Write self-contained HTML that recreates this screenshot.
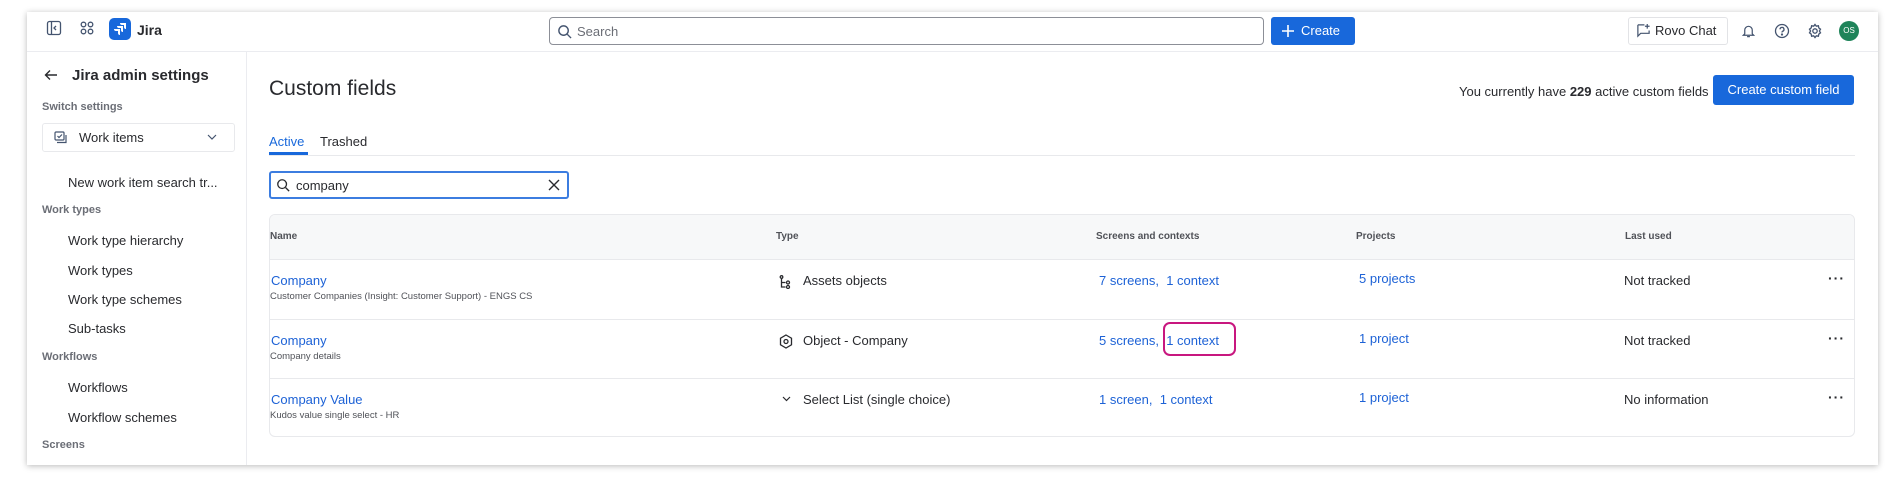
<!DOCTYPE html>
<html><head><meta charset="utf-8"><style>
*{box-sizing:border-box;margin:0;padding:0}
body{width:1902px;height:488px;background:#fff;font-family:"Liberation Sans",sans-serif;color:#292a2e;position:relative;overflow:hidden}
.win{position:absolute;left:27px;top:12px;width:1851px;height:453px;background:#fff;box-shadow:0 1px 6px rgba(0,0,0,.28);overflow:hidden}
.a{position:absolute;white-space:nowrap}
.hdr{position:absolute;left:0;top:0;width:100%;height:40px;border-bottom:1px solid #ebecf0}
.side{position:absolute;left:0;top:40px;width:220px;height:413px;border-right:1px solid #ebecf0}
.si{font-size:13px;color:#292a2e}
.sh{font-size:11px;font-weight:bold;color:#6b6e76}
.link{color:#1d62d6;font-size:13px}
.sub{font-size:9.5px;color:#505258}
.th{font-size:10px;font-weight:bold;color:#505258}
.td{font-size:13px}
.line{position:absolute;height:1px;background:#e8e9ec}
</style></head><body>
<div class="win">
 <div class="hdr">
  <svg class="a" style="left:19px;top:8px" width="16" height="16" viewBox="0 0 16 16" fill="none" stroke="#44546f" stroke-width="1.3"><rect x="1.5" y="1.5" width="13" height="13" rx="2"/><path d="M5.5 2v12M10 6l-2 2 2 2"/></svg>
  <svg class="a" style="left:52px;top:8px" width="16" height="16" viewBox="0 0 16 16" fill="none" stroke="#44546f" stroke-width="1.3"><circle cx="4.5" cy="4.5" r="2.3"/><circle cx="11.5" cy="4.5" r="2.3"/><circle cx="4.5" cy="11.5" r="2.3"/><circle cx="11.5" cy="11.5" r="2.3"/></svg>
  <div class="a" style="left:82px;top:6px;width:22px;height:22px;background:#1868db;border-radius:5px"></div>
  <svg class="a" style="left:86px;top:10px" width="14" height="14" viewBox="0 0 14 14" fill="#fff"><path d="M7 1h6v6a2 2 0 0 1-2-2V3H9a2 2 0 0 1-2-2zM4 4h6v6a2 2 0 0 1-2-2V6H6a2 2 0 0 1-2-2zM1 7h6v6a2 2 0 0 1-2-2V9H3a2 2 0 0 1-2-2z"/></svg>
  <div class="a" style="left:110px;top:10px;font-size:14px;font-weight:bold;color:#292a2e">Jira</div>
  <div class="a" style="left:522px;top:5px;width:715px;height:28px;border:1px solid #8c8f97;border-radius:4px"></div>
  <svg class="a" style="left:530px;top:12px" width="15" height="15" viewBox="0 0 16 16" fill="none" stroke="#44546f" stroke-width="1.5"><circle cx="7" cy="7" r="5"/><path d="M11 11l4 4"/></svg>
  <div class="a" style="left:550px;top:12px;font-size:13px;color:#6b6e76">Search</div>
  <div class="a" style="left:1244px;top:5px;width:84px;height:28px;background:#1868db;border-radius:3px;color:#fff;font-size:13px;line-height:28px;padding-left:30px">Create</div>
  <svg class="a" style="left:1254px;top:12px" width="14" height="14" viewBox="0 0 14 14" stroke="#fff" stroke-width="1.6"><path d="M7 1v12M1 7h12"/></svg>
  <div class="a" style="left:1601px;top:5px;width:100px;height:28px;border:1px solid #e2e3e6;border-radius:3px;font-size:13px;line-height:26px;padding-left:26px">Rovo Chat</div>
  <svg class="a" style="left:1609px;top:11px" width="15" height="15" viewBox="0 0 16 16" fill="none" stroke="#44546f" stroke-width="1.3"><path d="M2 2h7M2 2v12l3-3h9V8"/><path d="M12 1v5M9.5 3.5h5"/></svg>
  <svg class="a" style="left:1714px;top:11px" width="15" height="16" viewBox="0 0 16 16" fill="none" stroke="#44546f" stroke-width="1.3"><path d="M4 11V7a4 4 0 0 1 8 0v4l1.5 1.5h-11zM6.5 14h3"/></svg>
  <svg class="a" style="left:1747px;top:11px" width="16" height="16" viewBox="0 0 16 16" fill="none" stroke="#44546f" stroke-width="1.3"><circle cx="8" cy="8" r="6.5"/><path d="M6 6.3a2 2 0 1 1 2.5 2c-.5.2-.5.6-.5 1.2"/><circle cx="8" cy="11.5" r=".5" fill="#44546f"/></svg>
  <svg class="a" style="left:1780px;top:11px" width="16" height="16" viewBox="0 0 16 16" fill="none" stroke="#44546f" stroke-width="1.3"><circle cx="8" cy="8" r="2.2"/><path d="M8 1.5l1.3 1.7 2.1-.4.4 2.1 1.7 1.3-1.1 1.8 1.1 1.8-1.7 1.3-.4 2.1-2.1-.4L8 14.5l-1.3-1.7-2.1.4-.4-2.1-1.7-1.3L3.6 8 2.5 6.2l1.7-1.3.4-2.1 2.1.4z"/></svg>
  <div class="a" style="left:1812px;top:9px;width:20px;height:20px;border-radius:50%;background:#1f845a;color:#fff;font-size:8px;line-height:20px;text-align:center">OS</div>
 </div>
 <div class="side">
  <svg class="a" style="left:17px;top:16px" width="14" height="14" viewBox="0 0 14 14" fill="none" stroke="#292a2e" stroke-width="1.4"><path d="M13 7H2M6 2.5L1.5 7 6 11.5"/></svg>
  <div class="a" style="left:45px;top:15px;font-size:15px;font-weight:bold">Jira admin settings</div>
  <div class="a sh" style="left:15px;top:49px">Switch settings</div>
  <div class="a" style="left:15px;top:71px;width:193px;height:29px;border:1px solid #e8e9ec;border-radius:3px"></div>
  <svg class="a" style="left:27px;top:79px" width="14" height="13" viewBox="0 0 14 13" fill="none" stroke="#44546f" stroke-width="1.2"><rect x="1" y="1" width="9" height="8" rx="1"/><path d="M3.5 5l1.5 1.5 3-3M3 11.5h9V4"/></svg>
  <div class="a si" style="left:52px;top:78px">Work items</div>
  <svg class="a" style="left:180px;top:82px" width="10" height="7" viewBox="0 0 10 7" fill="none" stroke="#44546f" stroke-width="1.2"><path d="M1 1l4 4 4-4"/></svg>
  <div class="a si" style="left:41px;top:123px">New work item search tr...</div>
  <div class="a sh" style="left:15px;top:152px">Work types</div>
  <div class="a si" style="left:41px;top:181px">Work type hierarchy</div>
  <div class="a si" style="left:41px;top:211px">Work types</div>
  <div class="a si" style="left:41px;top:240px">Work type schemes</div>
  <div class="a si" style="left:41px;top:269px">Sub-tasks</div>
  <div class="a sh" style="left:15px;top:299px">Workflows</div>
  <div class="a si" style="left:41px;top:328px">Workflows</div>
  <div class="a si" style="left:41px;top:358px">Workflow schemes</div>
  <div class="a sh" style="left:15px;top:387px">Screens</div>
 </div>
 <div class="a" style="left:242px;top:65px;font-size:21px;color:#292a2e">Custom fields</div>
 <div class="a" style="left:1432px;top:72px;font-size:13px;width:245px;text-align:right">You currently have <b>229</b> active custom fields</div>
 <div class="a" style="left:1686px;top:63px;width:141px;height:30px;background:#1868db;border-radius:3px;color:#fff;font-size:13px;line-height:30px;text-align:center">Create custom field</div>
 <div class="a" style="left:242px;top:122px;font-size:13px;color:#1868db">Active</div>
 <div class="a" style="left:242px;top:140px;width:39px;height:3px;background:#1868db"></div>
 <div class="a" style="left:293px;top:122px;font-size:13px">Trashed</div>
 <div class="line" style="left:242px;top:143px;width:1586px"></div>
 <div class="a" style="left:242px;top:159px;width:300px;height:28px;border:2px solid #3c7de0;border-radius:3px"></div>
 <svg class="a" style="left:249px;top:166px" width="14" height="14" viewBox="0 0 16 16" fill="none" stroke="#292a2e" stroke-width="1.5"><circle cx="7" cy="7" r="5"/><path d="M11 11l4 4"/></svg>
 <div class="a" style="left:269px;top:166px;font-size:13px">company</div>
 <svg class="a" style="left:521px;top:167px" width="12" height="12" viewBox="0 0 12 12" stroke="#292a2e" stroke-width="1.4"><path d="M1 1l10 10M11 1L1 11"/></svg>
 <div class="a" style="left:242px;top:202px;width:1586px;height:223px;border:1px solid #e8e9ec;border-radius:6px;overflow:hidden">
  <div style="position:absolute;left:0;top:0;width:100%;height:45px;background:#f7f8f9;border-bottom:1px solid #e8e9ec"></div>
  <div class="line" style="left:0;top:104px;width:100%"></div>
  <div class="line" style="left:0;top:163px;width:100%"></div>
 </div>
 <div class="a th" style="left:243px;top:219px">Name</div>
 <div class="a th" style="left:749px;top:219px">Type</div>
 <div class="a th" style="left:1069px;top:219px">Screens and contexts</div>
 <div class="a th" style="left:1329px;top:219px">Projects</div>
 <div class="a th" style="left:1598px;top:219px">Last used</div>

 <div class="a link" style="left:244px;top:261px">Company</div>
 <div class="a sub" style="left:243px;top:279px">Customer Companies (Insight: Customer Support) - ENGS CS</div>
 <svg class="a" style="left:752px;top:263px" width="13" height="14" viewBox="0 0 13 14" fill="none" stroke="#292a2e" stroke-width="1.3"><circle cx="2.5" cy="2" r="1.3"/><path d="M2.5 3.5V12h4M2.5 7.5h4"/><circle cx="9" cy="7.5" r="1.5"/><circle cx="9" cy="12" r="1.5"/></svg>
 <div class="a td" style="left:776px;top:261px">Assets objects</div>
 <div class="a link" style="left:1072px;top:261px">7 screens,&nbsp; 1 context</div>
 <div class="a link" style="left:1332px;top:259px">5 projects</div>
 <div class="a td" style="left:1597px;top:261px">Not tracked</div>
 <div class="a" style="left:1801px;top:258px;font-size:14px;font-weight:bold;letter-spacing:1px">···</div>

 <div class="a link" style="left:244px;top:321px">Company</div>
 <div class="a sub" style="left:243px;top:339px">Company details</div>
 <svg class="a" style="left:752px;top:322px" width="14" height="15" viewBox="0 0 14 15" fill="none" stroke="#292a2e" stroke-width="1.3"><path d="M7 1l5.5 3.2v6.6L7 14 1.5 10.8V4.2z"/><circle cx="7" cy="7.5" r="2"/></svg>
 <div class="a td" style="left:776px;top:321px">Object - Company</div>
 <div class="a link" style="left:1072px;top:321px">5 screens,&nbsp; 1 context</div>
 <div class="a" style="left:1136px;top:310px;width:73px;height:34px;border:2px solid #c8177f;border-radius:7px"></div>
 <div class="a link" style="left:1332px;top:319px">1 project</div>
 <div class="a td" style="left:1597px;top:321px">Not tracked</div>
 <div class="a" style="left:1801px;top:318px;font-size:14px;font-weight:bold;letter-spacing:1px">···</div>

 <div class="a link" style="left:244px;top:380px">Company Value</div>
 <div class="a sub" style="left:243px;top:398px">Kudos value single select - HR</div>
 <svg class="a" style="left:755px;top:384px" width="9" height="6" viewBox="0 0 9 6" fill="none" stroke="#292a2e" stroke-width="1.2"><path d="M1 1l3.5 3.5L8 1"/></svg>
 <div class="a td" style="left:776px;top:380px">Select List (single choice)</div>
 <div class="a link" style="left:1072px;top:380px">1 screen,&nbsp; 1 context</div>
 <div class="a link" style="left:1332px;top:378px">1 project</div>
 <div class="a td" style="left:1597px;top:380px">No information</div>
 <div class="a" style="left:1801px;top:377px;font-size:14px;font-weight:bold;letter-spacing:1px">···</div>
</div>
</body></html>
